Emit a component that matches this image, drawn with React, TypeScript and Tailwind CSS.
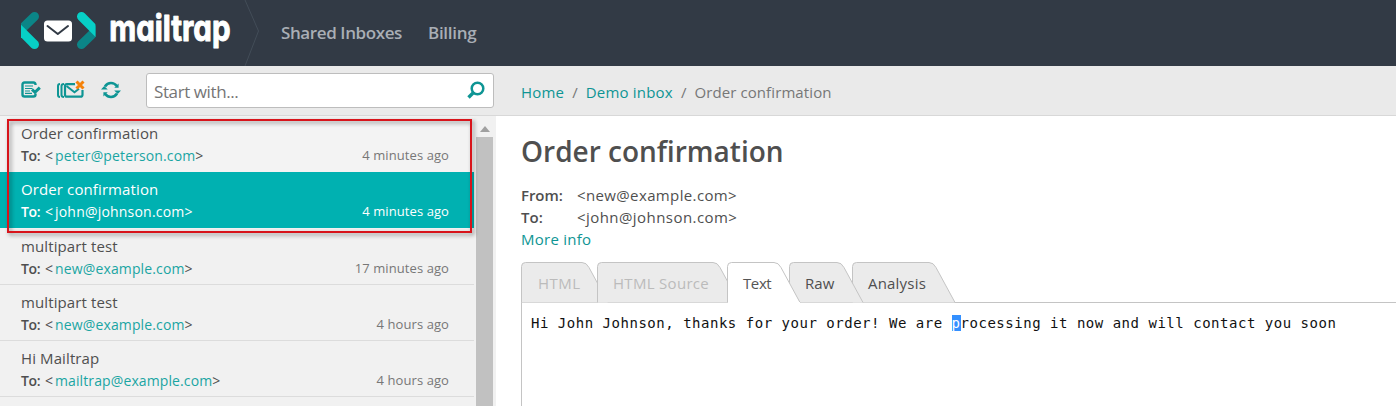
import React from "react";

type Mail = { subject: string; to: string; ago: string; selected?: boolean; spacing: string };

const mails: Mail[] = [
  { subject: "Order confirmation", to: "peter@peterson.com", ago: "4 minutes ago", spacing: "tracking-[0.13px]" },
  { subject: "Order confirmation", to: "john@johnson.com", ago: "4 minutes ago", selected: true, spacing: "tracking-[0.2px]" },
  { subject: "multipart test", to: "new@example.com", ago: "17 minutes ago", spacing: "tracking-[0.14px]" },
  { subject: "multipart test", to: "new@example.com", ago: "4 hours ago", spacing: "tracking-[0.14px]" },
  { subject: "Hi Mailtrap", to: "mailtrap@example.com", ago: "4 hours ago", spacing: "tracking-[0.11px]" },
];

function Logo() {
  return (
    <svg width="240" height="66" viewBox="0 0 240 66" className="shrink-0 overflow-visible" aria-label="mailtrap">
      <g strokeWidth="9" strokeLinecap="round">
        <clipPath id="lc"><rect x="21" y="0" width="20" height="66" /></clipPath>
        <clipPath id="rc"><rect x="75" y="0" width="20.5" height="66" /></clipPath>
        <g clipPath="url(#lc)">
          <path d="M34.500 16.500 20 30.500" stroke="#0b8587" />
          <path d="M34.500 44.500 17.500 27.500" stroke="#07cfc6" />
        </g>
        <g clipPath="url(#rc)">
          <path d="M81.500 44.500 96 30.500" stroke="#0b8587" />
          <path d="M81.500 16.500 98.500 33.500" stroke="#07cfc6" />
        </g>
      </g>
      <rect x="44" y="20.500" width="28" height="21" rx="3.500" fill="#fff" />
      <path d="M47.500 26 57.800 34 68 26" fill="none" stroke="#323a45" strokeWidth="2" strokeLinecap="round" strokeLinejoin="round" />
      <g transform="translate(109.300 41) scale(0.82 1)">
        <text fill="#fff" stroke="#fff" strokeWidth="1" strokeLinejoin="round" className="font-['Inter',sans-serif] text-[36px] font-bold [font-feature-settings:'cv11']">mailtrap</text>
      </g>
    </svg>
  );
}

function NotesIcon() {
  return (
    <svg width="20" height="18" viewBox="0 0 20 18" fill="none" stroke="#0e9594" strokeWidth="2.400">
      <path d="M14.500 4V3.500q0-2-2-2H3.500q-2 0-2 2v10q0 2 2 2h9q2 0 2-2V12.500" />
      <path d="M4 5h8M4 7.500h7.500M4 10h5M4 12.300h7" strokeWidth="1.200" />
      <path d="m11 8.500 3 2.800 4.800-4.600" strokeWidth="3" />
    </svg>
  );
}

function ClearIcon() {
  return (
    <svg width="28" height="19" viewBox="0 0 28 19" fill="none" stroke="#0e9594" strokeWidth="2.200">
      <path d="M3 4Q1 4 1 6v9q0 2 2 2M7 4Q4.500 4 4.500 6v9q0 2 2.500 2" strokeWidth="2" />
      <path d="M18 4.200H10q-2 0-2 2v8.500q0 2 2 2h13.500q2 0 2-2V10" />
      <path d="m9.500 6 8 6.300 4.500-3.500" strokeWidth="2" />
      <path d="m19.500 1.500 7 7M26.500 1.500l-7 7" stroke="#f5820a" strokeWidth="3" />
    </svg>
  );
}

function RefreshIcon() {
  return (
    <svg width="20" height="18" viewBox="0 0 20 18" fill="none" stroke="#0e9594" strokeWidth="2.600">
      <path d="M4 5.500C5.500 3 7.500 2 10 2c2.300 0 4.300 1 5.800 3M16 12.500c-1.500 2.500-3.500 3.500-6 3.500-2.300 0-4.300-1-5.800-3" />
      <path d="M0 8.500 3.200 5l3.600 3.500zM20 9.500 16.800 13l-3.600-3.500zM17.600 2.500v4.300h-4.300zM2.400 15.500v-4.300h4.300z" fill="#0e9594" stroke="none" />
    </svg>
  );
}

function Tab({ label, box, total, fill, text }: { label: string; box: string; total: number; fill: string; text: string }) {
  const t = total;
  return (
    <div className={`relative h-[41px] shrink-0 ${box}`}>
      <svg width={t + 1} height="41" className="absolute top-0 left-0" fill={fill}>
        <path d={`M.5 40.500V4.500q0-4 4-4H${t - 26}q4.500 0 7 5L${t} 40.500`} stroke="#c4c4c4" />
        {fill === "#ffffff" && <path d={`M1 40.500H${t}`} stroke="#fff" />}
      </svg>
      <span className={`relative block text-[15px] leading-[43px] whitespace-nowrap ${text}`}>{label}</span>
    </div>
  );
}

export default function App() {
  return (
    <div className="flex h-[406px] w-[1396px] flex-col overflow-hidden bg-white font-['Open_Sans','Noto_Sans',sans-serif] text-[#4f4f4f]">
      <header className="flex h-[66px] shrink-0 items-center bg-[#323a45]">
        <Logo />
        <svg width="24" height="66" className="shrink-0" fill="none">
          <path d="M5 0 18.500 31 5 66" stroke="#434d58" />
        </svg>
        <nav className="flex gap-[26px] pl-[17px] text-[17px] font-semibold text-[#a9aeb5]">
          <span className="w-[121px] tracking-[-0.4px] whitespace-nowrap">Shared Inboxes</span>
          <span className="tracking-[-0.3px]">Billing</span>
        </nav>
      </header>

      <div className="flex h-[50px] shrink-0 border-b border-[#d8d8d8] bg-[#eaeaea]">
        <div className="flex w-[496px] items-center pl-[21px]">
          <div className="pb-0.5"><NotesIcon /></div>
          <div className="pb-0.5 pl-4"><ClearIcon /></div>
          <div className="pb-0.5 pl-4"><RefreshIcon /></div>
          <div className="ml-[25px] flex h-[35px] w-[348px] items-center justify-between rounded-[3px] border border-[#bdbdbd] bg-white pr-2 pl-[7px]">
            <span className="pt-0.5 text-[17px] tracking-[-0.4px] text-[#757575]">Start with...</span>
            <svg width="18" height="19" fill="none" stroke="#0e9594">
              <circle cx="10.500" cy="7.500" r="5.800" strokeWidth="2.500" />
              <path d="m6.500 11.500-5 5" strokeWidth="3.400" />
            </svg>
          </div>
        </div>
        <div className="flex items-center gap-2 pt-[3px] pl-[25px] text-[15px] whitespace-nowrap text-[#777]">
          <span className="tracking-[0.2px] text-[#0e9594]">Home</span>
          <span>/</span>
          <span className="tracking-[0.2px] text-[#0e9594]">Demo inbox</span>
          <span>/</span>
          <span className="tracking-[0.1px]">Order confirmation</span>
        </div>
      </div>

      <div className="flex min-h-0 flex-1">
        <aside className="relative flex w-[496px] shrink-0 bg-[#f1f1f1]">
          <div className="w-[474px]">
            {mails.map((m, i) => (
              <div
                key={i}
                className={`flex h-14 flex-col pt-1.5 pr-[25px] pl-[21px] ${
                  m.selected ? "mb-px bg-[#00b1b1] text-white" : i > 1 ? "border-b border-[#dcdcdc] bg-[#f1f1f1]" : "bg-[#f3f3f3]"
                }`}
              >
                <div className="text-[15px] leading-[22px] tracking-[0.11px]">{m.subject}</div>
                <div className="flex justify-between text-[14px] leading-[23px]">
                  <div>
                    <span className="mr-[5px] inline-block w-[19px] font-semibold tracking-[-0.4px]">To:</span>
                    <span className="inline-block w-[10px]">&lt;</span>
                    <span className={`${m.spacing} ${m.selected ? "" : "text-[#1aa5a3]"}`}>{m.to}</span>
                    <span>&gt;</span>
                  </div>
                  <div className={`text-[13px] leading-[22px] tracking-[0.08px] ${m.selected ? "" : "text-[#777]"}`}>{m.ago}</div>
                </div>
              </div>
            ))}
          </div>
          <div className="ml-0.5 flex w-[17px] flex-col">
            <div className="flex h-[21px] items-center justify-center pt-1">
              <svg width="10" height="6" fill="#a0a0a0"><path d="M0 6 5 0l5 6z" /></svg>
            </div>
            <div className="flex-1 bg-[#c1c1c1]" />
          </div>
          <div className="absolute top-[3px] left-[7px] h-[114px] w-[465px] border-2 border-[#d8141b] drop-shadow-[2px_2px_2px_rgba(0,0,0,0.45)]" />
        </aside>

        <main className="flex flex-1 flex-col pl-[25px]">
          <h1 className="mt-[14px] text-[28px] leading-[42px] font-semibold">Order confirmation</h1>
          <div className="mt-3 text-[15px] leading-[22px]">
            <div className="flex"><span className="w-14 font-semibold tracking-[-0.05px]">From:</span><span className="tracking-[0.37px]">&lt;new@example.com&gt;</span></div>
            <div className="flex"><span className="w-14 font-semibold">To:</span><span className="tracking-[0.44px]">&lt;john@johnson.com&gt;</span></div>
            <div className="tracking-[0.26px] text-[#0e9594]">More info</div>
          </div>
          <div className="relative z-10 mt-3 flex h-[41px]">
            <Tab label="HTML" box="z-0 w-[76px]" total={87} fill="#ebebeb" text="pl-[17px] tracking-[0.5px] text-[#bbb]" />
            <Tab label="HTML Source" box="z-[1] w-[130px]" total={142} fill="#ebebeb" text="pl-4 tracking-[0.3px] text-[#bbb]" />
            <Tab label="Text" box="z-10 w-[62px]" total={73} fill="#ffffff" text="pl-4 text-[#555] tracking-[-0.4px]" />
            <Tab label="Raw" box="z-[5] w-[63px]" total={74} fill="#ebebeb" text="pl-4 tracking-[0.1px]" />
            <Tab label="Analysis" box="z-[4] w-[92px]" total={103} fill="#ebebeb" text="pl-4 tracking-[0.2px]" />
          </div>
          <div className="-mt-px flex-1 border-t border-l border-[#c4c4c4] pt-[9px] pl-[9px]">
            <p className="font-['DejaVu_Sans_Mono',monospace] text-[14px] leading-[22px] tracking-[0.52px] whitespace-pre text-[#111]">
              Hi John Johnson, thanks for your order! We are <span className="bg-[#3390ff] text-white">p</span>rocessing it now and will contact you soon
            </p>
          </div>
        </main>
      </div>
    </div>
  );
}
